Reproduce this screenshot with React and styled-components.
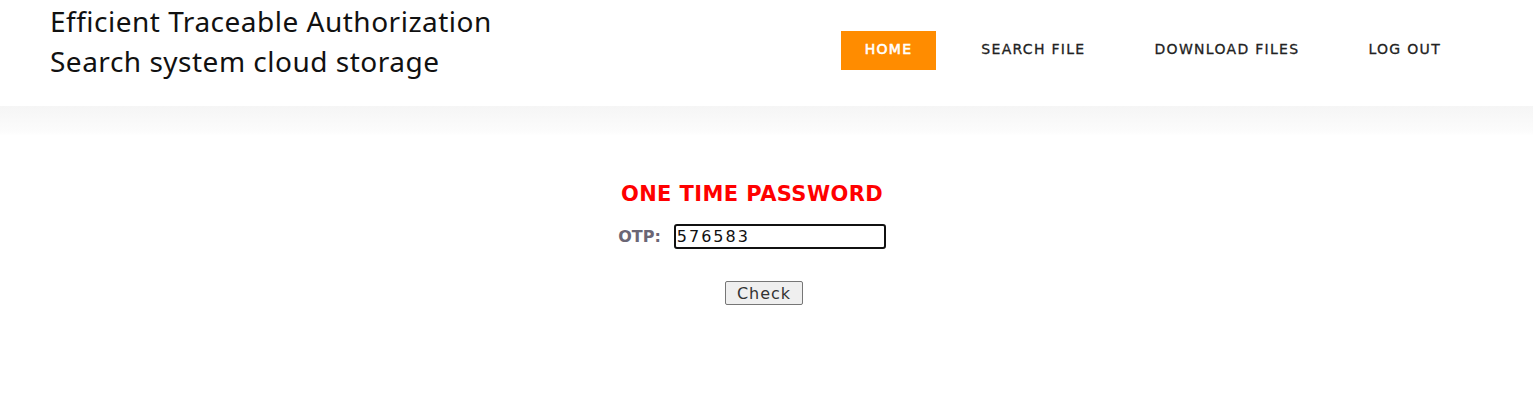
import React from 'react';
import styled, { createGlobalStyle } from 'styled-components';

const GlobalStyle = createGlobalStyle`
  body {
    margin: 0;
    background: #fff;
    font-family: "DejaVu Sans", "Open Sans", sans-serif;
  }
`;

const Header = styled.header`
  height: 106px;
  display: flex;
  align-items: flex-start;
  justify-content: space-between;
  padding: 0 68px 0 50px;
  background: #fff;
`;

const Brand = styled.h1`
  margin: 1px 0 0;
  font-family: "Noto Sans", "Open Sans", sans-serif;
  font-weight: 400;
  font-size: 28px;
  line-height: 40px;
  color: #111;
  letter-spacing: 0.5px;
`;

const Nav = styled.nav`
  display: flex;
  gap: 21px;
  margin-top: 31px;
`;

const NavItem = styled.a`
  display: flex;
  align-items: center;
  box-sizing: border-box;
  height: 39px;
  padding: 0 24px 3px;
  font-family: "DejaVu Sans", sans-serif;
  font-size: 14px;
  font-weight: 400;
  -webkit-text-stroke: ${({ active }) => (active ? '0.6px' : '0.3px')};
  color: ${({ active }) => (active ? '#fff' : '#222')};
  background: ${({ active }) => (active ? '#ff8c00' : 'transparent')};
  text-transform: uppercase;
  text-decoration: none;
  letter-spacing: 1.3px;
`;

const Shade = styled.div`
  height: 30px;
  background: linear-gradient(#f5f5f5, #fcfcfc 85%, #fff);
`;

const Form = styled.form`
  display: flex;
  flex-direction: column;
  align-items: center;
  padding: 46px 29px 0 0;
`;

const Title = styled.h2`
  margin: 0 0 18px;
  font-family: "DejaVu Sans", sans-serif;
  font-weight: 700;
  font-size: 21px;
  color: #ff0000;
  letter-spacing: 0.4px;
`;

const Row = styled.div`
  display: flex;
  align-items: center;
  gap: 13px;
`;

const Label = styled.label`
  font-family: "DejaVu Sans", sans-serif;
  font-weight: 700;
  font-size: 16px;
  color: #6b6675;
`;

const Input = styled.input`
  width: 212px;
  height: 25px;
  box-sizing: border-box;
  padding: 0 1px;
  border: 2px solid #111;
  border-radius: 3px;
  font-family: "DejaVu Sans", sans-serif;
  font-size: 16px;
  letter-spacing: 2px;
  color: #111;
  outline: none;
`;

const Button = styled.button`
  margin: 32px 0 0 24px;
  width: 78px;
  height: 24px;
  padding: 0;
  background: #efefef;
  border: 1px solid #767676;
  border-radius: 2px;
  font-family: "DejaVu Sans", sans-serif;
  font-size: 16px;
  letter-spacing: 1px;
  color: #333;
`;

const links = ['Home', 'Search File', 'Download Files', 'Log Out'];

export default function App() {
  return (
    <>
      <GlobalStyle />
      <Header>
        <Brand>
          Efficient Traceable Authorization
          <br />
          Search system cloud storage
        </Brand>
        <Nav>
          {links.map((l, i) => (
            <NavItem key={l} href="#" active={i === 0 ? 1 : 0}>
              {l}
            </NavItem>
          ))}
        </Nav>
      </Header>
      <Shade />
      <Form onSubmit={(e) => e.preventDefault()}>
        <Title>ONE TIME PASSWORD</Title>
        <Row>
          <Label htmlFor="otp">OTP:</Label>
          <Input id="otp" defaultValue="576583" />
        </Row>
        <Button type="submit">Check</Button>
      </Form>
    </>
  );
}
